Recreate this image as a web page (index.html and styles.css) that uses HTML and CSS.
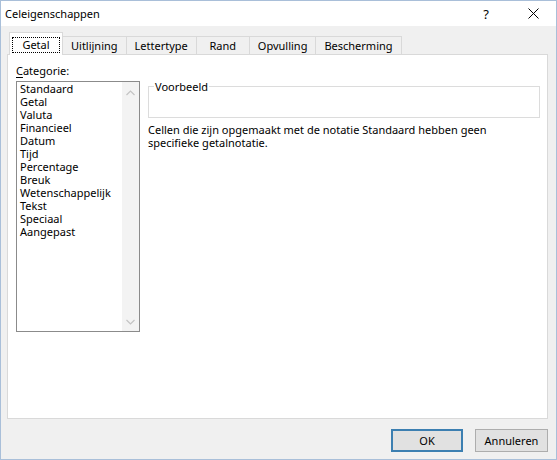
FILE: index.html
```html
<!DOCTYPE html>
<html lang="nl">
<head>
<meta charset="utf-8">
<title>Celeigenschappen</title>
<link rel="stylesheet" href="styles.css">
</head>
<body>
<div class="window">
  <div class="titlebar">
    <span class="title">Celeigenschappen</span>
    <span class="tb-help">?</span>
    <span class="tb-close">
      <svg width="11" height="11" viewBox="0 0 11 11"><path d="M0.5 0.5 L10.5 10.5 M10.5 0.5 L0.5 10.5" stroke="#000" stroke-width="1" fill="none"/></svg>
    </span>
  </div>
  <div class="body">
    <div class="tabs">
      <div class="tab active"><span class="focus">Getal</span></div>
      <div class="tab">Uitlijning</div>
      <div class="tab">Lettertype</div>
      <div class="tab">Rand</div>
      <div class="tab">Opvulling</div>
      <div class="tab">Bescherming</div>
    </div>
    <div class="panel">
      <div class="left">
        <div class="label"><u>C</u>ategorie:</div>
        <div class="listbox">
          <ul class="items">
            <li>Standaard</li>
            <li>Getal</li>
            <li>Valuta</li>
            <li>Financieel</li>
            <li>Datum</li>
            <li>Tijd</li>
            <li>Percentage</li>
            <li>Breuk</li>
            <li>Wetenschappelijk</li>
            <li>Tekst</li>
            <li>Speciaal</li>
            <li>Aangepast</li>
          </ul>
          <div class="scrollbar">
            <svg width="9" height="6" viewBox="0 0 9 6"><path d="M0.5 5 L4.5 1 L8.5 5" stroke="#c4c4c4" stroke-width="1.2" fill="none"/></svg>
            <svg width="9" height="6" viewBox="0 0 9 6"><path d="M0.5 1 L4.5 5 L8.5 1" stroke="#c4c4c4" stroke-width="1.2" fill="none"/></svg>
          </div>
        </div>
      </div>
      <div class="right">
        <fieldset class="sample">
          <legend>Voorbeeld</legend>
        </fieldset>
        <p class="desc">Cellen die zijn opgemaakt met de notatie Standaard hebben geen specifieke getalnotatie.</p>
      </div>
    </div>
    <div class="footer">
      <button class="btn default">OK</button>
      <button class="btn">Annuleren</button>
    </div>
  </div>
</div>
</body>
</html>
```

FILE: styles.css
```css
* { box-sizing: border-box; }
html, body { margin: 0; padding: 0; }
body {
  width: 557px;
  height: 460px;
  background: #ffffff;
  font-family: "Noto Sans", "Open Sans", sans-serif;
  font-size: 11px;
  color: #000;
}
.window {
  width: 557px;
  height: 460px;
  border: 1px solid #a9bfd9;
  display: flex;
  flex-direction: column;
  background: #f0f0f0;
}
.titlebar {
  height: 25px;
  background: #ffffff;
  display: flex;
  align-items: center;
  padding-left: 4px;
  flex-shrink: 0;
}
.title {
  font-size: 11px;
  flex: 1;
}
.tb-help {
  width: 20px;
  text-align: center;
  font-size: 13px;
  margin-right: 30px;
}
.tb-close {
  width: 14px;
  display: flex;
  justify-content: center;
  margin-right: 16px;
}
.body {
  flex: 1;
  display: flex;
  flex-direction: column;
  padding: 6px 8px 0 6px;
}
.tabs {
  height: 22px;
  display: flex;
  align-items: flex-end;
  padding-left: 4px;
  position: relative;
  z-index: 1;
}
.tab {
  height: 18px;
  min-width: 53px;
  padding: 0 8px;
  border: 1px solid #d9d9d9;
  border-bottom: none;
  border-left: none;
  background: #f0f0f0;
  display: flex;
  align-items: center;
  justify-content: center;
  white-space: nowrap;
}
.tab.active {
  height: 23px;
  margin: 0 0 -1px -2px;
  min-width: 54px;
  padding: 1px 2px 0;
  background: #ffffff;
  border-left: 1px solid #d9d9d9;
}
.focus {
  outline: 1px dotted #000;
  padding: 0 9px;
  line-height: 14px;
  display: block;
}
.panel {
  height: 365px;
  background: #ffffff;
  border: 1px solid #d9d9d9;
  display: flex;
  padding: 9px 7px 0 8px;
  flex-shrink: 0;
}
.left {
  width: 124px;
  display: flex;
  flex-direction: column;
}
.label {
  line-height: 14px;
  height: 17px;
}
.label u { text-decoration-thickness: 1px; text-underline-offset: 2px; }
.listbox {
  height: 251px;
  border: 1px solid #8b8b8b;
  display: flex;
}
.items {
  list-style: none;
  margin: 0;
  padding: 0 0 0 3px;
  flex: 1;
}
.items li {
  line-height: 13px;
  height: 13px;
  white-space: nowrap;
}
.scrollbar {
  width: 17px;
  background: #f3f3f3;
  display: flex;
  flex-direction: column;
  justify-content: space-between;
  align-items: center;
  padding: 8px 0 6px;
}
.right {
  flex: 1;
  margin-left: 8px;
  display: flex;
  flex-direction: column;
}
.sample {
  margin: 16px 0 0;
  padding: 0;
  height: 38px;
  border: 1px solid #dcdcdc;
}
.sample legend {
  padding: 0 1px;
  margin-left: 5px;
  line-height: 13px;
}
.desc {
  margin: 5px 0 0;
  line-height: 13px;
}
.footer {
  flex: 1;
  display: flex;
  justify-content: flex-end;
  align-items: flex-start;
  padding-top: 10px;
  gap: 12px;
}
.btn {
  font-family: inherit;
  font-size: 11px;
  height: 23px;
  width: 73px;
  background: #e1e1e1;
  border: 1px solid #adadad;
  margin: 0;
  padding: 0;
  color: #000;
}
.btn.default {
  border: 2px solid #3c7fb1;
  width: 72px;
}
```
